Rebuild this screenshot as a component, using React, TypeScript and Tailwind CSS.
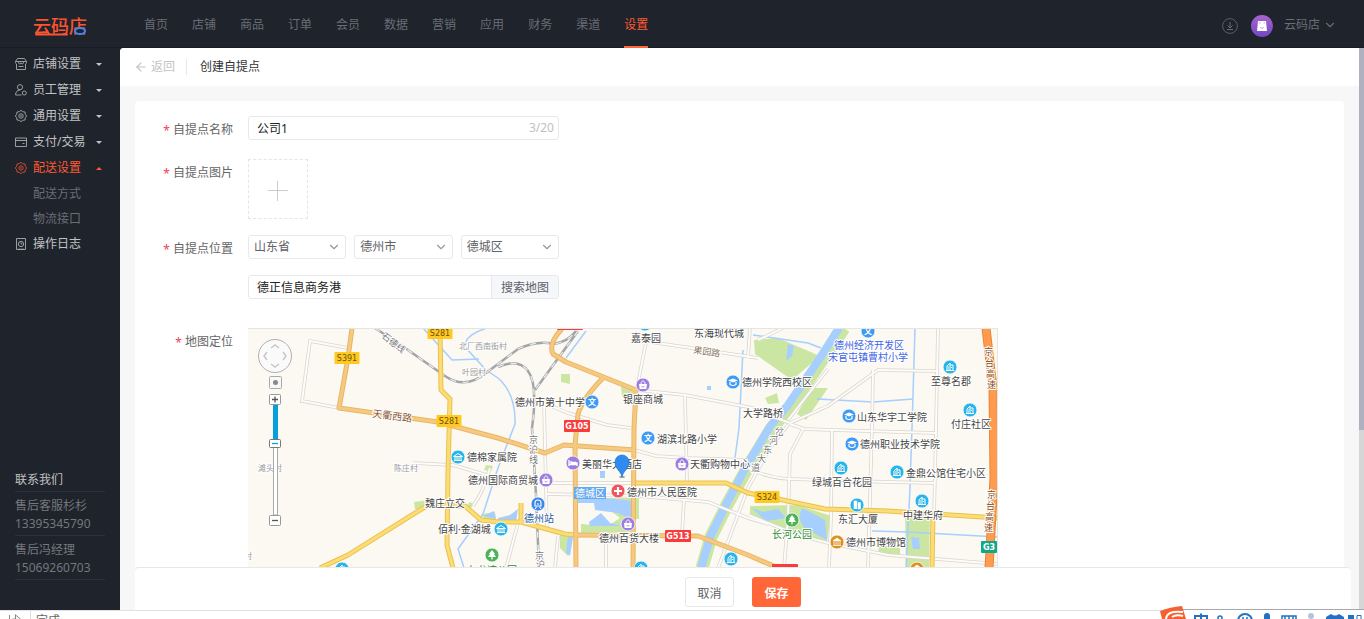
import { useState } from "react"
import type { ReactNode } from "react"
import { ArrowLeft, ChevronDown } from "lucide-react"

const topNav = ["首页", "店铺", "商品", "订单", "会员", "数据", "营销", "应用", "财务", "渠道", "设置"]

interface MenuItem {
  title: string
  icon: string
  arrow?: boolean
  children?: string[]
}

const menu: MenuItem[] = [
  { title: "店铺设置", icon: "shop", arrow: true },
  { title: "员工管理", icon: "staff", arrow: true },
  { title: "通用设置", icon: "gear", arrow: true },
  { title: "支付/交易", icon: "card", arrow: true },
  { title: "配送设置", icon: "gear", arrow: true, children: ["配送方式", "物流接口"] },
  { title: "操作日志", icon: "log" },
]

const contacts = [
  { name: "售后客服杉杉", phone: "13395345790" },
  { name: "售后冯经理", phone: "15069260703" },
]

const MenuIcon = ({ name }: { name: string }) => (
  <svg width="12" height="12" viewBox="0 0 12 12" fill="none" stroke="currentColor" strokeWidth=".9" className="opacity-85">
    {name === "shop" && (
      <>
        <path d="M2.5 .5h7l2 3v1.2a1.6 1.6 0 0 1-1 1.3v5.5h-9V6a1.6 1.6 0 0 1-1-1.3V3.5z" />
        <path d="M.5 3.5h11M3.5 3.5v1.2c0 1.6 2.5 1.6 2.5 0 0 1.6 2.5 1.6 2.5 0V3.5M3.5 8.5h5" />
      </>
    )}
    {name === "staff" && (
      <>
        <circle cx="5" cy="3.2" r="2.6" />
        <path d="M6.5 11H.6c0-3 1.400-4.900 4.400-4.900" />
        <circle cx="9.3" cy="9" r="2" />
      </>
    )}
    {name === "gear" && (
      <>
        <path d="M6 .3 7.700 1.700 10 2 10.300 4.300 11.700 6 10.300 7.700 10 10 7.700 10.300 6 11.700 4.300 10.300 2 10 1.700 7.700.3 6 1.700 4.300 2 2 4.300 1.700z" />
        <circle cx="6" cy="6" r="2.2" />
        <circle cx="6" cy="6" r=".4" />
      </>
    )}
    {name === "card" && <path d="M.5 2h11v8.500H.5zM.5 4.500h11M7.500 7.500h2" />}
    {name === "log" && (
      <>
        <path d="M1.5.5h9v11h-9z" />
        <circle cx="6" cy="6" r="2.7" />
        <path d="M6 4.4V6h1.4M3 11.2h6" />
      </>
    )}
  </svg>
)

const Caret = ({ up }: { up?: boolean }) => (
  <svg width="6" height="3" viewBox="0 0 6 3" fill="currentColor">
    <path d={up ? "M0 3 3 0l3 3z" : "M0 0h6L3 3z"} />
  </svg>
)

const Header = () => (
  <header className="flex h-12 shrink-0 items-stretch border-b border-[#191b27] bg-[#1f232b] text-[#696d75]">
    <div className="flex w-[120px] items-center justify-center pt-1">
      <svg width="58" height="24" viewBox="0 0 58 24">
        <text x="2" y="19" fontSize="18" fontWeight="500" fill="#fb5430">云码店</text>
        <path d="M5 20.500h31" stroke="#fb5430" strokeWidth="2" strokeLinecap="round" />
        <ellipse cx="49" cy="17" rx="5" ry="3" fill="#1f232b" stroke="#4586f0" strokeWidth="2" />
      </svg>
    </div>
    <nav className="ml-6 flex gap-6">
      {topNav.map(item => (
        <a
          key={item}
          href="#"
          className={item === "设置"
            ? "-mb-px flex items-center border-b-2 border-[#ff6738] pt-[3px] text-[#ff5a30]"
            : "flex items-center pt-[2px]"}
        >
          {item}
        </a>
      ))}
    </nav>
    <div className="ml-auto flex items-center pr-[27px] pt-1">
      <button aria-label="下载" className="mr-[13px]">
        <svg width="16" height="16" viewBox="0 0 16 16" fill="none" stroke="#696d75">
          <circle cx="8" cy="8" r="7.4" strokeWidth=".8" />
          <path d="M8 4v6M5.5 7.5 8 10l2.5-2.5M5 11.5h6" />
        </svg>
      </button>
      <svg width="22" height="22" viewBox="0 0 22 22" className="mr-[11px]">
        <defs>
          <linearGradient id="avatar" x1="0" y1="0" x2="0" y2="1">
            <stop offset="0" stopColor="#a763cf" />
            <stop offset="1" stopColor="#7446c4" />
          </linearGradient>
        </defs>
        <circle cx="11" cy="11" r="11" fill="url(#avatar)" />
        <path d="M7 6h8l1 10H6z" fill="#fff" />
        <path d="M8 8h1.5M12.500 8H14M9 12.500q2 1.500 4 0" fill="none" stroke="#c7a5df" />
      </svg>
      <button className="flex items-center gap-[3px] pb-[2px]">
        云码店
        <ChevronDown size={14} />
      </button>
    </div>
  </header>
)

const Sidebar = () => (
  <aside className="flex w-[120px] shrink-0 flex-col bg-[#1f232b] px-[15px] pb-[30px] pt-[3px] text-[#c1c3c6]">
    <ul>
      {menu.map(item => (
        <li key={item.title}>
          <a
            href="#"
            className={item.children
              ? "flex h-[26px] items-center text-[#ff5a30]"
              : "flex h-[26px] items-center"}
          >
            <MenuIcon name={item.icon} />
            <span className="ml-[6px]">{item.title}</span>
            {item.arrow && (
              <span className="ml-auto mr-[3px]">
                <Caret up={!!item.children} />
              </span>
            )}
          </a>
          {item.children?.map(child => (
            <a key={child} href="#" className="flex h-[25px] items-center pl-[18px] text-[#696d75]">
              {child}
            </a>
          ))}
        </li>
      ))}
    </ul>
    <div className="mt-auto leading-[18px]">
      <h3 className="border-b border-[#2b303b] pb-[2px]">联系我们</h3>
      {contacts.map(c => (
        <div key={c.phone} className="border-b border-[#2b303b] pb-[2px] pt-[5px] text-[#74777d]">
          <p>{c.name}</p>
          <p>{c.phone}</p>
        </div>
      ))}
    </div>
  </aside>
)

interface FieldProps {
  label: string
  htmlFor: string
  children: ReactNode
}

const Field = ({ label, htmlFor, children }: FieldProps) => (
  <div className="flex items-start gap-[15px]">
    <label htmlFor={htmlFor} className="flex w-[98px] shrink-0 justify-end gap-[3px] leading-[27px] text-[#666]">
      <span className="pt-[2px] leading-[25px] text-[#ed4256]">*</span>
      {label}
    </label>
    {children}
  </div>
)

const AreaSelect = ({ id, label, value }: { id: string; label: string; value: string }) => (
  <div className="relative">
    <select
      id={id}
      aria-label={label}
      defaultValue={value}
      className="h-6 w-full appearance-none rounded-[3px] border border-[#e8e8ea] bg-white px-[5px] text-[#606266]"
    >
      <option>{value}</option>
    </select>
    <ChevronDown size={14} className="pointer-events-none absolute right-[5px] top-[5px] text-[#999]" />
  </div>
)

type PoiKind = "home" | "bag" | "school" | "cap" | "hotel" | "hospital" | "tree" | "museum" | "train" | "tower" | "gate"

const poiColor: Record<PoiKind, string> = {
  home: "#27b4ea",
  gate: "#27b4ea",
  tower: "#27b4ea",
  bag: "#9b7ee0",
  hotel: "#9b7ee0",
  school: "#3d9bf3",
  cap: "#3d9bf3",
  train: "#3d85e8",
  hospital: "#ee555d",
  tree: "#4bb356",
  museum: "#dc901f",
}

const pois: { kind: PoiKind; x: number; y: number }[] = [
  { kind: "gate", x: 210, y: 129 },
  { kind: "gate", x: 253, y: 201 },
  { kind: "home", x: 94, y: 241 },
  { kind: "home", x: 397, y: -4 },
  { kind: "home", x: 393, y: 240 },
  { kind: "home", x: 483, y: 231 },
  { kind: "home", x: 702, y: 39 },
  { kind: "home", x: 722, y: 82 },
  { kind: "home", x: 593, y: 140 },
  { kind: "home", x: 649, y: 144 },
  { kind: "home", x: 674, y: 173 },
  { kind: "tower", x: 609, y: 177 },
  { kind: "tree", x: 244, y: 227 },
  { kind: "tree", x: 544, y: 192 },
  { kind: "bag", x: 395, y: 57 },
  { kind: "bag", x: 434, y: 136 },
  { kind: "bag", x: 298, y: 152 },
  { kind: "bag", x: 380, y: 196 },
  { kind: "hotel", x: 325, y: 135 },
  { kind: "school", x: 344, y: 74 },
  { kind: "school", x: 400, y: 110 },
  { kind: "school", x: 620, y: 3 },
  { kind: "cap", x: 485, y: 54 },
  { kind: "cap", x: 601, y: 88 },
  { kind: "cap", x: 604, y: 116 },
  { kind: "train", x: 290, y: 176 },
  { kind: "hospital", x: 370, y: 163 },
  { kind: "museum", x: 589, y: 214 },
  { kind: "museum", x: 669, y: 241 },
]

const Poi = ({ kind, x, y }: { kind: PoiKind; x: number; y: number }) => (
  <g transform={`translate(${x} ${y})`}>
    <circle r="7" fill={poiColor[kind]} stroke="#fff" strokeWidth=".8" />
    {kind === "home" && <path d="M-4 3.500h8M-3 3.500V-1L0-4V3.500M0-2h3v5.500M-1.500-.5v1M-1.500 1.500v1M1.500 0v1" fill="none" stroke="#fff" />}
    {kind === "gate" && <path d="M-4.500-.5 0-3.500l4.500 3zM-3 0v3.500M-1 0v3.500M1 0v3.500M3 0v3.500M-4 3.500h8" fill="none" stroke="#fff" />}
    {kind === "tower" && <path d="M-3 4v-8h3v8M1-2.500h2.500V4H1" fill="#fff" stroke="#fff" strokeWidth=".6" />}
    {kind === "tree" && <path d="M0-5 3-1H2l2 3H.6v2.500h-1.200V2H-4l2-3h-1z" fill="#fff" />}
    {kind === "bag" && (
      <>
        <path d="M-4-1h8l-.6 5h-6.800z" fill="#fff" />
        <path d="M-2-1c0-4 4-4 4 0" fill="none" stroke="#fff" />
        <path d="M-1.500 1.300q1.500 1.500 3 0" fill="none" stroke="#9b7ee0" strokeWidth=".8" />
      </>
    )}
    {kind === "hotel" && <path d="M-4-3v6M-4 1.500h8M4 3V0h-6v-2M-2-.5h5" fill="none" stroke="#fff" strokeWidth="1.400" />}
    {kind === "school" && <text y="3" fontSize="8" textAnchor="middle" fontWeight="bold" fill="#fff">文</text>}
    {kind === "cap" && (
      <>
        <path d="M-5-1.500 0-3.500l5 2L0 .5z" fill="#fff" />
        <path d="M-3 0v2.500q3 2 6 0V0" fill="none" stroke="#fff" strokeWidth="1.200" />
      </>
    )}
    {kind === "train" && <path d="M-3 2V-1c0-4 6-4 6 0v3zM-1.500 3-3 5M1.500 3 3 5M-1 0h2" fill="none" stroke="#fff" strokeWidth="1.100" />}
    {kind === "hospital" && <path d="M0-4v8M-4 0h8" stroke="#fff" strokeWidth="2.200" />}
    {kind === "museum" && <path d="M-4-1 0-4l4 3zM-3 0v3M-1 0v3M1 0v3M3 0v3M-4 3.500h8" fill="#fff" stroke="#fff" strokeWidth=".8" />}
  </g>
)

interface MapLabel {
  t: string
  x: number
  y: number
  s?: number
  c?: string
  r?: number
}

const mapLabels: MapLabel[] = [
  { t: "北厂西南街村", x: 211, y: 21, s: 8, c: "#999" },
  { t: "叶园村", x: 214, y: 47, s: 8, c: "#999" },
  { t: "陈庄村", x: 146, y: 143, s: 8, c: "#999" },
  { t: "滩头村", x: 10, y: 143, s: 8, c: "#999" },
  { t: "村", x: -4, y: 231, s: 8, c: "#999" },
  { t: "嘉泰园", x: 383, y: 14 },
  { t: "东海现代城", x: 446, y: 9 },
  { t: "德州市第十中学", x: 267, y: 78 },
  { t: "银座商城", x: 375, y: 75 },
  { t: "德州学院西校区", x: 494, y: 58 },
  { t: "湖滨北路小学", x: 409, y: 115 },
  { t: "大学路桥", x: 495, y: 89 },
  { t: "德棉家属院", x: 219, y: 133 },
  { t: "德州国际商贸城", x: 220, y: 156 },
  { t: "魏庄立交", x: 177, y: 179 },
  { t: "佰利·金湖城", x: 190, y: 205 },
  { t: "美丽华大酒店", x: 334, y: 140 },
  { t: "天衢购物中心", x: 442, y: 140 },
  { t: "德州市人民医院", x: 379, y: 168 },
  { t: "德州百货大楼", x: 351, y: 214 },
  { t: "德州站", x: 276, y: 194, c: "#1c5a9e" },
  { t: "九龙湾公园", x: 219, y: 246, c: "#2f8b2f" },
  { t: "德州经济开发区", x: 586, y: 21, c: "#4063e5" },
  { t: "宋官屯镇曹村小学", x: 580, y: 33, c: "#4063e5" },
  { t: "山东华宇工学院", x: 609, y: 93 },
  { t: "德州职业技术学院", x: 612, y: 120 },
  { t: "至尊名郡", x: 683, y: 57 },
  { t: "付庄社区", x: 703, y: 100 },
  { t: "绿城百合花园", x: 564, y: 158 },
  { t: "金鼎公馆住宅小区", x: 658, y: 149 },
  { t: "东汇大厦", x: 590, y: 195 },
  { t: "中建华府", x: 655, y: 191 },
  { t: "长河公园", x: 524, y: 210, c: "#2f8b2f" },
  { t: "德州市博物馆", x: 598, y: 218 },
  { t: "石德线", x: 133, y: 9, s: 9, c: "#777", r: 38 },
  { t: "天衢西路", x: 124, y: 89, c: "#8a5a35", r: 7 },
  { t: "果园路", x: 445, y: 25, s: 9, c: "#8a7360", r: 8 },
]

// road names that run top to bottom, one character at a time
const verticalLabels = [
  { t: "京沪线", x: 285, y: 115, dx: 0, dy: 10, c: "#777" },
  { t: "京沪", x: 291, y: 231, dx: 1, dy: 9, c: "#777" },
  { t: "岔河东大道", x: 531, y: 107, dx: -6, dy: 9, c: "#777" },
  { t: "京台高速", x: 740, y: 27, dx: 1, dy: 11, c: "#8a4a15" },
  { t: "京台高速", x: 743, y: 170, dx: -1, dy: 11, c: "#8a4a15" },
]

const shields = [
  { t: "S281", x: 192, y: 5, w: 25, c: "#ffc921", f: "#6b5310" },
  { t: "S391", x: 99, y: 30, w: 25, c: "#ffc921", f: "#6b5310" },
  { t: "S281", x: 201, y: 93, w: 25, c: "#ffc921", f: "#6b5310" },
  { t: "S324", x: 519, y: 169, w: 25, c: "#ffc921", f: "#6b5310" },
  { t: "G105", x: 329, y: 98, w: 26, c: "#f83b3b", f: "#fff" },
  { t: "G513", x: 430, y: 208, w: 26, c: "#f83b3b", f: "#fff" },
  { t: "", x: 322, y: -4, w: 26, c: "#f83b3b", f: "#fff" },
  { t: "", x: 537, y: 242, w: 26, c: "#f83b3b", f: "#fff" },
  { t: "G3", x: 741, y: 219, w: 16, c: "#10a88b", f: "#fff" },
]

const minorRoads = [
  "M100 20 62 13 54 73 91 80",
  "M165 135 205 137 242 148",
  "M225 178Q235 165 242 140",
  "M296 75 299 203M296 75 320 85 359 97 383 100",
  "M398 14 389 60M403 14 470 24 510 30",
  "M388 62 437 67 505 80",
  "M437 67 439 155M386 122 408 128 440 130 500 132",
  "M299 155 387 155M299 166 390 168 460 174 500 190 520 196",
  "M436 171 434 207M358 214 358 240M310 208 307 240M270 195 258 240",
  "M500 80 542 95 580 78 630 42 690 43M580 41 540 92",
  "M625 42 624 100 620 240",
  "M690 0 688 100 686 190",
  "M542 96 556 101 584 102 687 105",
  "M555 101 542 126 540 190 536 240",
  "M584 103 583 190 581 240",
  "M500 140Q520 150 542 151L640 154 686 155",
  "M540 97 522 120 500 160 470 240",
  "M500 187 550 207 580 215 640 227 750 236",
  "M502 0 500 30M510 12 535 0",
]

const orangeRoads = [
  "M104 0 100 30 91 80 190 94 250 110 297 125 316 117 387 122",
  "M314 1Q300 15 305 26L318 34 388 62 386 100 385 240",
  "M355 50Q335 70 330 86L327 117 328 240",
  "M327 207 450 208 500 227 530 240",
]

const yellowRoads = [
  "M192 0 193 62 202 71 200 143 199 217 205 240",
  "M72 240 100 227 180 177 217 178 233 192 250 194 273 194 317 206 328 207",
  "M273 175 273 194",
  "M387 155 478 155 500 165 530 171 577 181 640 183 750 190",
  "M685 186 684 240",
]

const railways = [
  "M127 0 160 22 197 48Q217 62 238 45L270 21Q290 12 305 16 320 14 328 3",
  "M250 39Q270 30 280 43T284 100L288 167 291 240",
  "M330 3 287 62",
]

const CityMap = () => (
  <svg width="750" height="240" viewBox="0 0 750 240" role="img" aria-label="地图">
    <rect width="750" height="240" fill="#fcf9f2" />
    <g fill="#cbe6a3">
      <path d="M506 12 530 10 572 28 544 52 507 26z" />
      <path d="M564 60 580 60 558 92 549 86z" />
      <path d="M517 70 529 65 531 75 520 76z" />
      <path d="M166 174 180 172 178 182 167 181z" />
      <path d="M313 46 322 46 322 56 313 54z" />
      <path d="M373 58 386 60 385 68 374 68z" />
      <path d="M238 137 245 138 243 143 236 142z" />
      <path d="M221 174 226 176 223 180 220 178z" />
      <path d="M346 170 391 170 391 191 383 191 383 204 333 205 333 196 360 198 372 190z" />
      <path d="M502 178 550 177 583 188 579 214 532 200 502 186z" />
      <path d="M657 182 682 184 681 240 658 240z" />
      <path d="M631 217 652 220 652 228 630 227z" />
      <path d="M312 204 320 205 320 228 312 220z" />
      <path d="M233 186 247 184 248 191 236 191z" />
    </g>
    <path d="M596 0 572 35 542 79 523 101 500 139 480 175 463 209 454 240" fill="none" stroke="#cbe6a3" strokeWidth="13" />
    <path d="M591 0 572 30 540 77 523 97 499 137 480 173 463 207 453 240" fill="none" stroke="#a6ceff" strokeWidth="8" />
    <g fill="#a6ceff">
      <path d="M326 167 386 173 386 193 370 185 347 182 346 175 328 175z" />
      <path d="M341 194 353 185 362 195 374 198 342 198z" />
      <path d="M554 180 566 186 577 192 579 212 556 200 551 190z" />
      <path d="M504 180 515 184 530 181 538 190 518 193z" />
      <path d="M250 190 262 187 270 181 268 194 250 193z" />
      <path d="M663 209 671 210 672 221 665 221z" />
      <path d="M540 16 546 18 544 28 538 33z" />
      <path d="M352 143 357 143 357 150 352 150zM459 58h4v4h-4zM320 207 325 209 322 228 318 225z" />
      <path d="M235 188 246 183 248 191z" />
    </g>
    <g fill="none" stroke="#a6ceff" strokeWidth="1.500">
      <path d="M175 0 204 32 231 31" />
      <path d="M250 50Q268 66 267 96L250 140 235 186 210 221 216 240" />
      <path d="M239 0Q214 8 218 20L238 42 250 50" />
      <path d="M338 3 318 30" />
      <path d="M505 7 560 15 573 20" />
      <path d="M667 0 664 100 662 160 658 240M569 71 625 74 665 71" />
      <path d="M624 203 660 204 750 209M495 22 491 100 487 130" />
    </g>
    <g fill="none" stroke="#d9d5cd" strokeWidth="3.500">
      {minorRoads.map(d => <path key={d} d={d} />)}
    </g>
    <g fill="none" stroke="#fdfcfa" strokeWidth="2">
      {minorRoads.map(d => <path key={d} d={d} />)}
    </g>
    <g fill="none" stroke="#a3a6a8" strokeWidth="2.500">
      {railways.map(d => <path key={d} d={d} />)}
    </g>
    <g fill="none" stroke="#eee" strokeWidth="1.200" strokeDasharray="6 7">
      {railways.map(d => <path key={d} d={d} />)}
    </g>
    <g fill="none" stroke="#ebc04c" strokeWidth="5" strokeLinejoin="round">
      {yellowRoads.map(d => <path key={d} d={d} />)}
    </g>
    <g fill="none" stroke="#fbdd78" strokeWidth="3" strokeLinejoin="round">
      {yellowRoads.map(d => <path key={d} d={d} />)}
    </g>
    <g fill="none" stroke="#e9b662" strokeWidth="5" strokeLinejoin="round">
      {orangeRoads.map(d => <path key={d} d={d} />)}
    </g>
    <g fill="none" stroke="#f6c982" strokeWidth="3" strokeLinejoin="round">
      {orangeRoads.map(d => <path key={d} d={d} />)}
    </g>
    <path d="M738 0 745 60 746 150 741 240" fill="none" stroke="#e88634" strokeWidth="9" />
    <path d="M738 0 745 60 746 150 741 240" fill="none" stroke="#ff9a4f" strokeWidth="7" />

    {shields.map((s, i) => (
      <g key={i}>
        <rect x={s.x - s.w / 2} y={s.y - 6} width={s.w} height="12" rx="1" fill={s.c} />
        {s.t && (
          <text
            x={s.x}
            y={s.y + 3}
            fontSize="8"
            fontWeight={s.f === "#fff" ? "bold" : "normal"}
            textAnchor="middle"
            fill={s.f}
            className="font-['DejaVu_Sans',sans-serif]"
          >
            {s.t}
          </text>
        )}
      </g>
    ))}
    <g stroke="#fff" strokeWidth="2" strokeLinejoin="round" paintOrder="stroke">
      {mapLabels.map(l => (
        <text
          key={l.t + l.x}
          x={l.x}
          y={l.y}
          fontSize={l.s ?? 10}
          fill={l.c ?? "#444"}
          transform={l.r ? `rotate(${l.r} ${l.x} ${l.y})` : undefined}
        >
          {l.t}
        </text>
      ))}
      {verticalLabels.map((l, i) => (
        <text key={i} fontSize="9" fill={l.c}>
          {l.t.split("").map((ch, n) => (
            <tspan key={n} x={l.x - 4 + n * l.dx} y={l.y + n * l.dy}>{ch}</tspan>
          ))}
        </text>
      ))}
    </g>
    <rect x="326" y="159" width="32" height="12" fill="#65a9ee" />
    <text x="327" y="169" fontSize="10" fill="#fff">德城区</text>
    {pois.map((p, i) => <Poi key={i} {...p} />)}

    <ellipse cx="374" cy="149" rx="3" ry="1" fill="#999" />
    <path d="M374 149c-1-6-7-8-7-15a7 7 0 0 1 14 0c0 7-6 9-7 15z" fill="#2f8bf0" stroke="#1d70cf" strokeWidth=".7" />

    <circle cx="27" cy="28" r="16.500" fill="#fafafa" stroke="#b0b0b0" />
    <path d="M23 20l4-3 4 3M23 36l4 3 4-3M19 24l-3 4 3 4M35 24l3 4-3 4" fill="none" stroke="#c8c8c8" strokeWidth="1.500" />
    <rect x="21.500" y="48.500" width="12" height="12" rx="1" fill="#f8f8f8" stroke="#aaa" />
    <circle cx="27.500" cy="54.500" r="2.500" fill="#888" />
    <rect x="25.500" y="112" width="4" height="75" fill="#fff" stroke="#aaa" />
    <rect x="25" y="77" width="5" height="36" fill="#06a0dc" />
    <rect x="21.500" y="66.500" width="11" height="10" rx="1" fill="#fff" stroke="#999" />
    <path d="M24 71.500h6M27 68.500v6" stroke="#555" strokeWidth="1.300" />
    <rect x="21.500" y="111.500" width="11" height="8" rx="1" fill="#fff" stroke="#777" />
    <path d="M24 115.500h6" stroke="#06a0dc" strokeWidth="1.300" />
    <rect x="21.500" y="187.500" width="11" height="10" rx="1" fill="#fff" stroke="#999" />
    <path d="M24 192.500h6" stroke="#555" strokeWidth="1.300" />
    <path d="M0 .5h749.500V240" fill="none" stroke="#e5e5e5" />
  </svg>
)

const PickupForm = () => {
  const [name, setName] = useState("公司1")
  const [address, setAddress] = useState("德正信息商务港")

  return (
    <form className="flex flex-col gap-4 rounded bg-white pt-[15px]">
      <Field label="自提点名称" htmlFor="name">
        <div className="flex h-6 w-[311px] items-center rounded-[3px] border border-[#e8e8ea] pr-1">
          <input
            id="name"
            value={name}
            maxLength={20}
            onChange={e => setName(e.target.value)}
            className="min-w-0 flex-1 bg-transparent pl-2 pt-px text-[#222] outline-none"
          />
          <span className="text-[#c0c0c0]">{name.length}/20</span>
        </div>
      </Field>
      <Field label="自提点图片" htmlFor="image">
        <button
          id="image"
          type="button"
          aria-label="上传图片"
          className="flex size-[60px] items-center justify-center border border-dashed border-[#e5e5e5] pt-1"
        >
          <svg width="20" height="20" viewBox="0 0 20 20" stroke="#ccc">
            <path d="M9.500 0v20M0 9.500h20" />
          </svg>
        </button>
      </Field>
      <Field label="自提点位置" htmlFor="province">
        <div className="flex w-[311px] flex-col gap-4">
          <div className="grid grid-cols-3 gap-2">
            <AreaSelect id="province" label="省" value="山东省" />
            <AreaSelect id="city" label="市" value="德州市" />
            <AreaSelect id="district" label="区" value="德城区" />
          </div>
          <div className="flex h-6 overflow-hidden rounded-[3px] border border-[#e8e8ea]">
            <input
              aria-label="详细地址"
              value={address}
              onChange={e => setAddress(e.target.value)}
              className="min-w-0 flex-1 pl-2 pt-px text-[#222] outline-none"
            />
            <button type="button" className="w-[67px] border-l border-[#e8e8ea] bg-[#f5f7fa] pt-px text-[#606266]">
              搜索地图
            </button>
          </div>
        </div>
      </Field>
      <div className="mt-[13px] h-[420px]">
        <Field label="地图定位" htmlFor="map">
          <div id="map" className="w-[750px] shrink-0 bg-[#fcf9f2]">
            <CityMap />
          </div>
        </Field>
      </div>
    </form>
  )
}

const StatusBar = () => (
  <div className="relative h-[9px] shrink-0 border-t border-[#e2e2e2] bg-white text-[#666]">
    <div className="flex h-2 items-start overflow-hidden leading-5">
      <svg width="30" height="9" viewBox="0 0 30 9" fill="none" stroke="#888">
        <path d="M9.500 4v5M12.500 8h4M15.500 3.500v5M15.500 4l5 4" />
      </svg>
      <span className="border-l border-[#ddd] pl-[5px]">完成</span>
    </div>
    <svg width="206" height="13" viewBox="0 0 206 13" className="absolute -top-[5px] right-0">
      <path d="M22 3.500H206" stroke="#a5a7b0" />
      <path d="M22 4h184v9H22z" fill="#fff" />
      <path d="M2 5Q12 1 24 0L28 13H4z" fill="#f6602f" />
      <path d="M25 6Q9 4 8 13M25 10Q18 8 14 11" fill="none" stroke="#fff" strokeWidth="2" />
      <g fill="none" stroke="#2172c4" strokeWidth="2">
        <path d="M37 13V10h12v3M43 7.500v6" />
        <circle cx="62" cy="12" r="2" strokeWidth="1.500" />
        <circle cx="87" cy="15" r="7" />
        <path d="M85 11v3M89 11v3" strokeWidth="1.500" />
        <path d="M124 13v-3h14v3M127 10v4M131 10v4M135 10v4" strokeWidth="1.500" />
      </g>
      <path d="M106 13v-3a3 3 0 0 1 6 0v3zM168 11l5-3q4 3 8 0l5 3v2h-18zM190 9h6v4h-6z" fill="#2172c4" />
      <path d="M199 9.500h4V14h-4z" fill="none" stroke="#2172c4" />
      <circle cx="153" cy="10" r="3" fill="#b6c3da" />
    </svg>
  </div>
)

export default function App() {
  return (
    <div className="flex h-screen flex-col overflow-hidden bg-[#1f232b] font-['Noto_Sans','Noto_Sans_CJK_SC',sans-serif] text-xs">
      <Header />
      <div className="flex min-h-0 flex-1">
        <Sidebar />
        <main className="flex min-w-0 flex-1 flex-col overflow-hidden rounded-tl bg-[#f7f7f7]">
          <div className="flex h-[38px] shrink-0 items-center bg-white px-[14px]">
            <a href="#" className="flex items-center gap-[3px] text-[#c3c3c3]">
              <ArrowLeft size={14} />
              返回
            </a>
            <h1 className="ml-[11px] border-l border-[#e8e8e8] pl-[13px] text-[#333]">创建自提点</h1>
          </div>
          <div className="min-h-0 flex-1 overflow-hidden px-[15px] pt-[15px]">
            <PickupForm />
          </div>
          <div className="ml-[15px] mr-2 flex h-[43px] shrink-0 items-start justify-center gap-[18px] rounded-t border-t border-[#e8e8e8] bg-white pt-[9px]">
            <button className="h-[30px] w-[49px] rounded-[3px] border border-[#e8e8ea] pt-[3px] text-[#606266]">取消</button>
            <button className="h-[30px] w-[49px] rounded-[3px] bg-[#ff6738] pt-[3px] font-bold text-white">保存</button>
          </div>
        </main>
        <div className="w-[5px] shrink-0 bg-[#d6d6d6]">
          <div className="h-[68%] bg-[#b0b1c0]" />
        </div>
      </div>
      <StatusBar />
    </div>
  )
}
